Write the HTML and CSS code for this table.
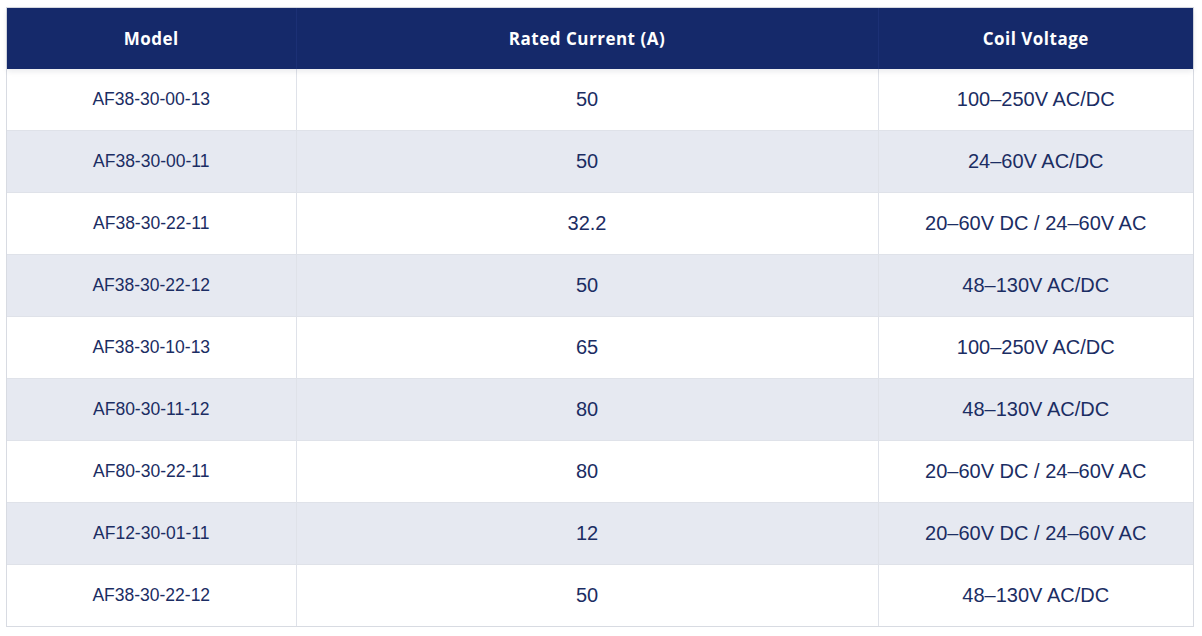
FILE: index.html
```html
<!DOCTYPE html>
<html lang="en">
<head>
<meta charset="utf-8">
<title>Contactor Models</title>
<link rel="stylesheet" href="styles.css">
</head>
<body>
<div class="table-wrap">
  <table class="spec-table">
    <colgroup>
      <col class="col-model">
      <col class="col-current">
      <col class="col-voltage">
    </colgroup>
    <thead>
      <tr>
        <th>Model</th>
        <th>Rated Current (A)</th>
        <th>Coil Voltage</th>
      </tr>
    </thead>
    <tbody>
      <tr><td class="model">AF38-30-00-13</td><td>50</td><td>100–250V AC/DC</td></tr>
      <tr><td class="model">AF38-30-00-11</td><td>50</td><td>24–60V AC/DC</td></tr>
      <tr><td class="model">AF38-30-22-11</td><td>32.2</td><td>20–60V DC / 24–60V AC</td></tr>
      <tr><td class="model">AF38-30-22-12</td><td>50</td><td>48–130V AC/DC</td></tr>
      <tr><td class="model">AF38-30-10-13</td><td>65</td><td>100–250V AC/DC</td></tr>
      <tr><td class="model">AF80-30-11-12</td><td>80</td><td>48–130V AC/DC</td></tr>
      <tr><td class="model">AF80-30-22-11</td><td>80</td><td>20–60V DC / 24–60V AC</td></tr>
      <tr><td class="model">AF12-30-01-11</td><td>12</td><td>20–60V DC / 24–60V AC</td></tr>
      <tr><td class="model">AF38-30-22-12</td><td>50</td><td>48–130V AC/DC</td></tr>
    </tbody>
  </table>
</div>
</body>
</html>
```
FILE: styles.css
```css
html, body {
  margin: 0;
  padding: 0;
  background: #ffffff;
}

body {
  padding: 7px 8px 0 6px;
  font-family: "Liberation Sans", Arial, sans-serif;
}

.table-wrap {
  border: 1px solid #d8dbe2;
}

.spec-table {
  width: 100%;
  border-collapse: collapse;
  table-layout: fixed;
}

.col-model { width: 289px; }
.col-current { width: 582px; }

.spec-table thead tr {
  box-shadow: 0 2px 6px rgba(20, 30, 60, 0.10);
  position: relative;
}

.spec-table th {
  height: 61px;
  padding: 0;
  background: #15296a;
  color: #ffffff;
  font-family: "Open Sans", sans-serif;
  font-weight: 700;
  font-size: 17px;
  letter-spacing: 0.5px;
  text-align: center;
  border-left: 1px solid #1c3075;
}

.spec-table th:first-child { border-left: none; }

.spec-table td {
  height: 61px;
  padding: 0;
  text-align: center;
  color: #1b2d63;
  font-size: 20px;
  border-bottom: 1px solid #dfe2e9;
  border-left: 1px solid #dfe2e9;
}

.spec-table td:first-child { border-left: none; }

.spec-table td.model {
  font-size: 17.5px;
}

.spec-table tbody tr:nth-child(even) td {
  background: #e6e9f1;
}

.spec-table tbody tr:last-child td {
  border-bottom: none;
}
```
